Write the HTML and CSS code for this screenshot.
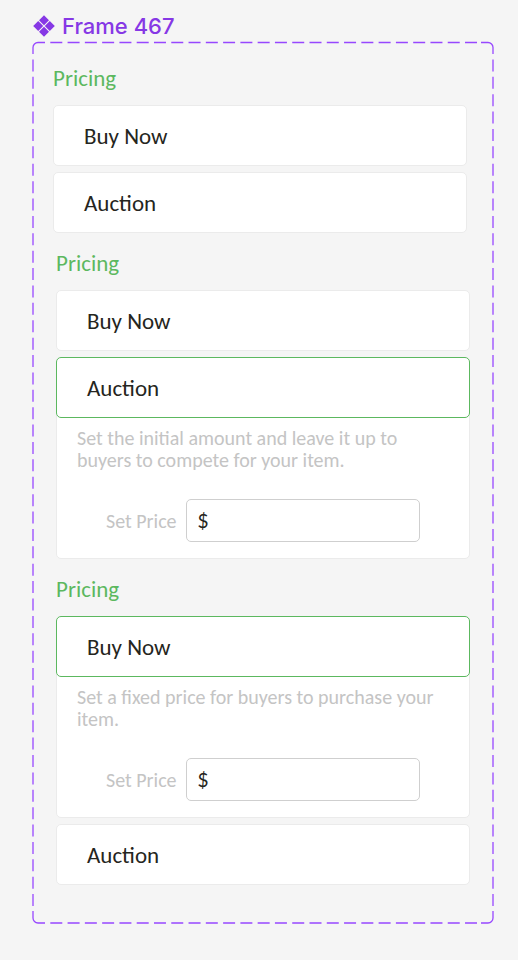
FILE: index.html
```html
<!DOCTYPE html>
<html lang="en">
<head>
<meta charset="utf-8">
<meta name="viewport" content="width=device-width, initial-scale=1">
<title>Frame 467</title>
<link rel="stylesheet" href="styles.css">
</head>
<body>
<main class="page">
  <h1 class="frame-title">
    <svg class="frame-icon" viewBox="0 0 22 22" aria-hidden="true">
      <path d="M11 .2 16 5.2 11 10.2 6 5.2zM5.2 6 10.2 11 5.2 16 .2 11zM16.8 6 21.8 11 16.8 16 11.8 11zM11 11.8 16 16.8 11 21.8 6 16.8z"/>
    </svg>
    Frame 467
  </h1>
  <div class="frame">
    <svg class="outline" aria-hidden="true">
      <line class="dash-x" x1="17.3" y1=".5" x2="97%" y2=".5"/>
      <line class="dash-x" x1="17.3" y1="100%" x2="97%" y2="100%"/>
      <line class="dash-y" x1="0" y1="17.4" x2="0" y2="98.5%"/>
      <line class="dash-y" x1="100%" y1="17.4" x2="100%" y2="98.5%"/>
      <path d="M0 12V5.5a5 5 0 0 1 5-5H12"/>
      <svg class="corner" x="100%"><path d="M0 12V5.5a5 5 0 0 0-5-5H-12"/></svg>
      <svg class="corner" y="100%"><path d="M0-12V-5a5 5 0 0 0 5 5H12"/></svg>
      <svg class="corner" x="100%" y="100%"><path d="M0-12V-5a5 5 0 0 1-5 5H-12"/></svg>
    </svg>

    <section class="pricing pricing-closed">
      <h2 class="heading">Pricing</h2>
      <div class="options">
        <button class="option" type="button">Buy Now</button>
        <button class="option" type="button">Auction</button>
      </div>
    </section>

    <section class="pricing">
      <h2 class="heading">Pricing</h2>
      <div class="options">
        <button class="option" type="button">Buy Now</button>
        <div class="expanded">
          <button class="option option-active" type="button" aria-expanded="true">Auction</button>
          <div class="panel">
            <p class="description">Set the initial amount and leave it up to buyers to compete for your item.</p>
            <div class="field">
              <label for="auction-price">Set Price</label>
              <input class="price" id="auction-price" type="text" value="$">
            </div>
          </div>
        </div>
      </div>
    </section>

    <section class="pricing">
      <h2 class="heading">Pricing</h2>
      <div class="options">
        <div class="expanded">
          <button class="option option-active" type="button" aria-expanded="true">Buy Now</button>
          <div class="panel">
            <p class="description">Set a fixed price for buyers to purchase your item.</p>
            <div class="field">
              <label for="fixed-price">Set Price</label>
              <input class="price" id="fixed-price" type="text" value="$">
            </div>
          </div>
        </div>
        <button class="option" type="button">Auction</button>
      </div>
    </section>
  </div>
</main>
</body>
</html>
```
FILE: styles.css
```css
* {
  box-sizing: border-box;
}

body {
  margin: 0;
  background: #f5f5f5;
  color: #252520;
  font-family: Carlito, Lato, "Liberation Sans", sans-serif;
}

.page {
  padding: 12px 25px 36px 33px;
}

.frame-title {
  display: flex;
  align-items: center;
  gap: 7px;
  margin: 0 0 2px;
  color: #8638e5;
  font: 500 22px/28px Inter, sans-serif;
}

.frame-icon {
  width: 22px;
  height: 22px;
  fill: currentColor;
}

.frame {
  position: relative;
  display: flex;
  flex-direction: column;
  gap: 16px;
  padding: 22px 23px 38px;
}

.outline {
  position: absolute;
  inset: 0;
  width: 100%;
  height: 100%;
  overflow: visible;
  fill: none;
  stroke: #9747ff;
  stroke-width: 1.3;
  pointer-events: none;
}

.corner {
  overflow: visible;
}

.dash-x {
  stroke-dasharray: 12 5.28;
}

.dash-y {
  stroke-dasharray: 12 5.39;
}

.pricing-closed {
  margin-right: 3px;
  margin-left: -3px;
}

.heading {
  margin: 0 0 13px;
  color: #5cb85f;
  font-size: 23px;
  font-weight: 400;
  line-height: 28px;
}

.options {
  display: flex;
  flex-direction: column;
  gap: 6px;
}

.option {
  position: relative;
  display: block;
  width: 100%;
  height: 61px;
  padding: 0 30px;
  border: 1px solid #ebebeb;
  border-radius: 5px;
  background: #fff;
  color: inherit;
  font: inherit;
  font-size: 23px;
  text-align: left;
}

.option-active {
  border-color: #5cb85f;
}

.panel {
  margin-top: -6px;
  padding: 14px 20px 16px;
  border: 1px solid #ebebeb;
  border-radius: 5px;
  background: #fff;
  color: #c4c4c4;
  font-size: 20px;
  line-height: 22px;
}

.description {
  margin: 0 10px 28px 0;
}

.field {
  display: flex;
  align-items: center;
  gap: 9px;
  padding: 0 29px;
}

.price {
  flex: 1;
  min-width: 0;
  height: 43px;
  padding: 0 11px;
  border: 1px solid #cfcfcf;
  border-radius: 5px;
  background: #fff;
  color: #252520;
  font: 19px Lato, Carlito, sans-serif;
}
```
